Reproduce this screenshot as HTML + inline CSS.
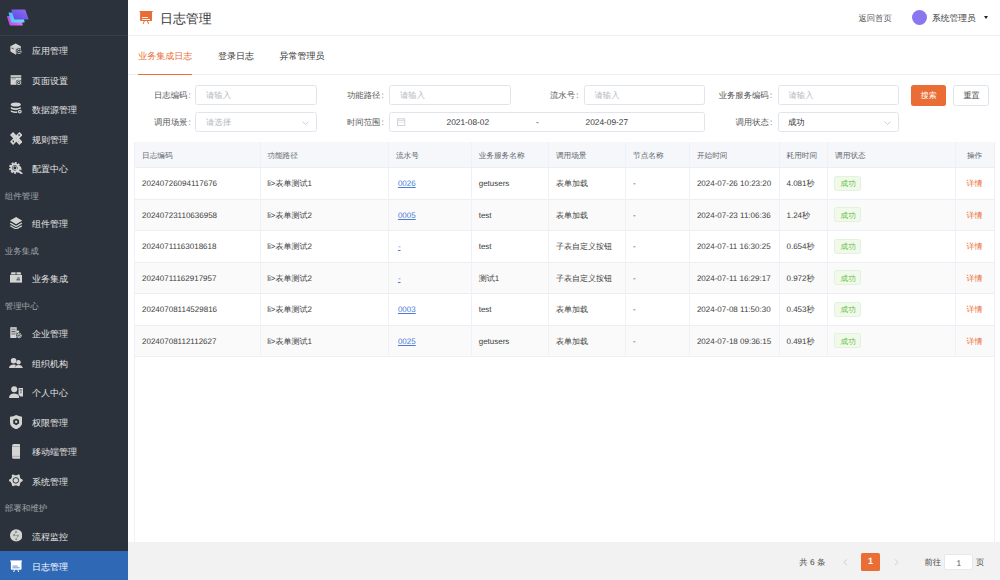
<!DOCTYPE html>
<html><head><meta charset="utf-8"><style>
*{box-sizing:border-box;margin:0;padding:0}
html,body{width:1000px;height:580px;overflow:hidden;background:#fff;font-family:"Liberation Sans",sans-serif;color:#333;text-rendering:geometricPrecision}
.a{position:absolute}
.t{position:absolute;white-space:nowrap;line-height:1}
#side{position:absolute;left:0;top:0;width:128px;height:580px;background:#2c323b}
.it{position:absolute;left:0;width:128px;height:29.75px;color:#e4e4e4;font-size:9px;white-space:nowrap}
.it span{position:absolute;left:32px;top:11.7px;line-height:1;font-weight:500}
.it svg{position:absolute}
.grp{position:absolute;left:4.8px;height:25px;color:#a3a7ad;font-size:8.5px;white-space:nowrap}
.grp span{position:absolute;left:0;top:8.7px;line-height:1}
.it.act{background:#2f68b5;color:#fff}
.lbl{position:absolute;font-size:8.33px;color:#555;white-space:nowrap;line-height:1}
.inp{position:absolute;height:20px;border:1px solid #e1e4ea;border-radius:2.5px;background:#fff;font-size:8.33px;color:#b6bac2;white-space:nowrap}
.inp>span{position:absolute;top:5.2px;line-height:1}
.hl{position:absolute;height:1px;background:#eceef4}
.vl{position:absolute;width:1px;background:#f0f1f6}
.c{position:absolute;white-space:nowrap;line-height:1;font-size:8px;color:#3d3d3d}
.h{position:absolute;white-space:nowrap;line-height:1;font-size:7.65px;color:#63676f}
.lnk{color:#4a7bd6;text-decoration:underline;text-decoration-thickness:0.8px;text-underline-offset:1px}
.tag{position:absolute;height:15px;width:26.8px;border:1px solid #e1f3d8;background:#f0f9eb;border-radius:2.5px}
.tag span{position:absolute;left:5.3px;top:3.4px;line-height:1;font-size:7.6px;color:#67c23a}
.op{color:#ea6d35}
#foot{position:absolute;left:128px;top:542px;width:872px;height:38px;background:#f2f2f2}
</style></head><body>
<div id="side">
  <svg class="a" style="left:6px;top:8.5px" width="24" height="19" viewBox="0 0 24 19">
    <defs><linearGradient id="g1" x1="0" y1="1" x2="1" y2="0"><stop offset="0" stop-color="#5a48e2"/><stop offset="1" stop-color="#8e6ff3"/></linearGradient>
    <linearGradient id="g2" x1="0" y1="0" x2="1" y2="1"><stop offset="0" stop-color="#4fb8f2"/><stop offset="1" stop-color="#6ad9f7"/></linearGradient>
    <linearGradient id="g3" x1="0" y1="0" x2="1" y2="0"><stop offset="0" stop-color="#b44ee8"/><stop offset="1" stop-color="#e070f5"/></linearGradient></defs>
    <path d="M1.6,7 H13 Q13.8,7 14,7.8 L16.8,15.8 Q17,16.5 16.2,16.5 H4.6 Q3.8,16.5 3.6,15.8 L1,7.8 Q0.8,7 1.6,7Z" fill="url(#g3)"/>
    <path d="M3.2,3.5 H15.2 Q16,3.5 16.2,4.3 L18.6,12.7 Q18.8,13.5 18,13.5 H6.2 Q5.4,13.5 5.2,12.7 L2.6,4.3 Q2.4,3.5 3.2,3.5Z" fill="url(#g2)"/>
    <path d="M6,0.5 H18.4 Q19.2,0.5 19.5,1.3 L22.5,9.7 Q22.8,10.5 22,10.5 H9.2 Q8.4,10.5 8.1,9.7 L5.4,1.3 Q5.2,0.5 6,0.5Z" fill="url(#g1)"/>
  </svg>
  <div class="a" style="left:0;top:35px;width:128px;height:1px;background:#383e47"></div>
  <div class="it" style="top:35.50px"><svg style="left:9.8px;top:7.80px;width:12px;height:12px" viewBox="0 0 12 12"><path d="M0.4 3.2L5.6 0.5L10.8 3.2V8.6L5.6 11.5L0.4 8.6Z" fill="#d4d4d4"/><path d="M0.4 3.2L5.6 5.6L10.8 3.2" fill="none" stroke="#b8b8b8" stroke-width="0.5"/><path d="M5.6 5.6V11.5" stroke="#b8b8b8" stroke-width="0.5"/><path d="M1.4 5L3.8 6" stroke="#2c323b" stroke-width="0.7"/><circle cx="8.9" cy="8.4" r="3.1" fill="#2c323b"/><circle cx="8.9" cy="8.4" r="2.1" fill="none" stroke="#d4d4d4" stroke-width="1.1" stroke-dasharray="1 0.6"/><circle cx="8.9" cy="8.4" r="0.7" fill="#d4d4d4"/></svg><span>应用管理</span></div><div class="it" style="top:65.00px"><svg style="left:10px;top:8.70px;width:12px;height:12px" viewBox="0 0 12 12"><rect x="0.6" y="1.2" width="10.6" height="9.6" fill="#d4d4d4"/><rect x="0.6" y="2.9" width="10.6" height="0.6" fill="#2c323b"/><rect x="1.6" y="4.2" width="4.2" height="1.2" fill="#9a9da2"/><circle cx="8.7" cy="8.6" r="2.9" fill="#2c323b"/><circle cx="8.7" cy="8.6" r="2" fill="none" stroke="#d4d4d4" stroke-width="1"/><path d="M8.1 7.6L9.6 8.6L8.1 9.6Z" fill="#d4d4d4"/></svg><span>页面设置</span></div><div class="it" style="top:94.50px"><svg style="left:10px;top:7.70px;width:12.5px;height:12.5px" viewBox="0 0 12.5 12.5"><ellipse cx="5.8" cy="2.6" rx="5" ry="2" fill="#d4d4d4"/><path d="M0.8 4.9Q5.8 7.4 10.8 4.9V6.7Q5.8 9.2 0.8 6.7Z" fill="#d4d4d4"/><path d="M0.8 8.3Q5.8 10.8 10.8 8.3V9.8Q5.8 12.3 0.8 9.8Z" fill="#d4d4d4"/><circle cx="9.8" cy="9.6" r="2.6" fill="#2c323b"/><circle cx="9.8" cy="9.6" r="1.9" fill="#d4d4d4"/><rect x="9.2" y="9" width="1.2" height="1.2" fill="#2c323b"/></svg><span>数据源管理</span></div><div class="it" style="top:124.00px"><svg style="left:9.8px;top:7.80px;width:12.5px;height:12.9px" viewBox="0 0 12.5 12.9"><path d="M0 3.1L3.1 0L12.5 9.8L9.4 12.9Z" fill="#d4d4d4"/><path d="M9.4 0L12.5 3.1L3.1 12.9L0 9.8Z" fill="#d4d4d4"/><path d="M8.2 3.0L9.4 2.7L9.2 4.1" fill="none" stroke="#2c323b" stroke-width="0.9"/><path d="M2.4 9.2L3.6 8.9L3.4 10.3" fill="none" stroke="#2c323b" stroke-width="0.9"/><circle cx="3.2" cy="3.6" r="0.45" fill="#7d8086"/><circle cx="6.2" cy="6.6" r="0.45" fill="#7d8086"/><circle cx="8.6" cy="9.2" r="0.45" fill="#7d8086"/></svg><span>规则管理</span></div><div class="it" style="top:153.50px"><svg style="left:8.8px;top:8.10px;width:14.2px;height:12.7px" viewBox="0 0 14.2 12.7"><g transform="translate(5.9 5.9)"><circle r="4.6" fill="none" stroke="#d4d4d4" stroke-width="2.6" stroke-dasharray="1.8 1.2"/><circle r="3.7" fill="none" stroke="#d4d4d4" stroke-width="1.8"/><circle r="1.9" fill="none" stroke="#d4d4d4" stroke-width="0.9"/></g><path d="M7.4 7.2L13.2 12" stroke="#d4d4d4" stroke-width="1.9"/><path d="M8.8 4.4Q12.4 4.6 12 8.2" fill="none" stroke="#d4d4d4" stroke-width="1.1"/></svg><span>配置中心</span></div><div class="grp" style="top:183.00px"><span>组件管理</span></div><div class="it" style="top:208.60px"><svg style="left:9.8px;top:8.20px;width:12.2px;height:12.5px" viewBox="0 0 12.2 12.5"><path d="M6.1 0L12.2 3.6L6.1 7.2L0 3.6Z" fill="#d4d4d4"/><path d="M0.3 6.1L6.1 9.5L11.9 6.1" fill="none" stroke="#d4d4d4" stroke-width="1.3"/><path d="M0.3 8.7L6.1 12L11.9 8.7" fill="none" stroke="#d4d4d4" stroke-width="1.3"/></svg><span>组件管理</span></div><div class="grp" style="top:238.10px"><span>业务集成</span></div><div class="it" style="top:263.70px"><svg style="left:10px;top:7.20px;width:12px;height:12px" viewBox="0 0 12 12"><rect x="0" y="4" width="12" height="7.6" fill="#d4d4d4"/><path d="M0.7 3.6L1.4 1.3H5.6V3.6Z" fill="#d4d4d4"/><path d="M6.5 3.6V1.3H10.6L11.3 3.6Z" fill="#d4d4d4"/><rect x="7.2" y="6.6" width="2.4" height="0.9" fill="#2c323b"/><rect x="6.4" y="8.4" width="3.6" height="0.9" fill="#2c323b"/></svg><span>业务集成</span></div><div class="grp" style="top:293.20px"><span>管理中心</span></div><div class="it" style="top:318.80px"><svg style="left:10px;top:8.50px;width:12px;height:12px" viewBox="0 0 12 12"><rect x="0.3" y="0.2" width="6.4" height="10.8" fill="#d4d4d4"/><rect x="1.4" y="1.6" width="4.2" height="1.6" fill="#8d9096"/><rect x="1.4" y="4.3" width="4.2" height="0.9" fill="#2c323b"/><rect x="1.4" y="6.1" width="4.2" height="1.6" fill="#8d9096"/><rect x="6.6" y="3.6" width="2.6" height="3.2" fill="#d4d4d4"/><circle cx="9" cy="8.6" r="3" fill="#2c323b"/><circle cx="9" cy="8.6" r="2" fill="none" stroke="#d4d4d4" stroke-width="1.4" stroke-dasharray="1 0.5"/><circle cx="9" cy="8.6" r="1.1" fill="none" stroke="#d4d4d4" stroke-width="0.7"/></svg><span>企业管理</span></div><div class="it" style="top:348.30px"><svg style="left:9px;top:9.40px;width:14px;height:10.4px" viewBox="0 0 14 10.4"><circle cx="4.6" cy="2.8" r="2.8" fill="#d4d4d4"/><path d="M0 10.4Q0 6.4 4.8 6.4Q6 6.4 6.8 6.8L5.6 10.4Z" fill="#d4d4d4"/><circle cx="9.5" cy="4.2" r="2.2" fill="#d4d4d4"/><path d="M5.9 10.4Q5.9 7.1 9.6 7.1Q13.4 7.1 13.9 10.4Z" fill="#d4d4d4"/></svg><span>组织机构</span></div><div class="it" style="top:377.80px"><svg style="left:8.8px;top:7.80px;width:14.5px;height:12.1px" viewBox="0 0 14.5 12.1"><circle cx="5.2" cy="3.2" r="3" fill="#d4d4d4"/><path d="M0 12.1Q0 7.4 5.3 7.4Q8.4 7.4 9.8 9.6L10.2 12.1Z" fill="#d4d4d4"/><path d="M9.6 2H14.5V10.6H11.2L9.6 8.4Z" fill="#d4d4d4"/><rect x="10.6" y="3.6" width="2.6" height="0.8" fill="#2c323b"/><rect x="11" y="5.4" width="1.8" height="1.8" fill="#8d9096"/></svg><span>个人中心</span></div><div class="it" style="top:407.30px"><svg style="left:9.8px;top:7.50px;width:12.3px;height:14.4px" viewBox="0 0 12.3 14.4"><path d="M6.15 0Q9 1.4 12.3 1.8V7.4Q12.3 11.8 6.15 14.4Q0 11.8 0 7.4V1.8Q3.3 1.4 6.15 0Z" fill="#d4d4d4"/><path d="M6.15 3.4L9.1 5.1V8.5L6.15 10.2L3.2 8.5V5.1Z" fill="#2c323b"/><circle cx="6.15" cy="6.8" r="1.2" fill="#d4d4d4"/></svg><span>权限管理</span></div><div class="it" style="top:436.80px"><svg style="left:11.7px;top:7.20px;width:8.7px;height:14.8px" viewBox="0 0 8.7 14.8"><rect x="0" y="0" width="8.7" height="14.8" rx="1.9" fill="#d4d4d4"/><rect x="0" y="2.3" width="8.7" height="0.6" fill="#8d9096"/><rect x="0" y="11.9" width="8.7" height="0.6" fill="#8d9096"/></svg><span>移动端管理</span></div><div class="it" style="top:466.30px"><svg style="left:9px;top:8.00px;width:13.7px;height:12.8px" viewBox="0 0 13.7 12.8"><circle cx="6.85" cy="6.4" r="5.3" fill="#d4d4d4"/><circle cx="12.25" cy="6.40" r="1.45" fill="#d4d4d4"/><circle cx="9.55" cy="10.82" r="1.45" fill="#d4d4d4"/><circle cx="4.15" cy="10.82" r="1.45" fill="#d4d4d4"/><circle cx="1.45" cy="6.40" r="1.45" fill="#d4d4d4"/><circle cx="4.15" cy="1.98" r="1.45" fill="#d4d4d4"/><circle cx="9.55" cy="1.98" r="1.45" fill="#d4d4d4"/><circle cx="12.83" cy="9.75" r="1.5" fill="#2c323b"/><circle cx="6.85" cy="13.10" r="1.5" fill="#2c323b"/><circle cx="0.87" cy="9.75" r="1.5" fill="#2c323b"/><circle cx="0.87" cy="3.05" r="1.5" fill="#2c323b"/><circle cx="6.85" cy="-0.30" r="1.5" fill="#2c323b"/><circle cx="12.83" cy="3.05" r="1.5" fill="#2c323b"/><circle cx="6.85" cy="6.4" r="2.8" fill="none" stroke="#2c323b" stroke-width="1"/></svg><span>系统管理</span></div><div class="grp" style="top:495.80px"><span>部署和维护</span></div><div class="it" style="top:521.40px"><svg style="left:9.9px;top:7.90px;width:12.5px;height:12.8px" viewBox="0 0 12.5 12.8"><circle cx="6.2" cy="6.4" r="6.2" fill="#d4d4d4"/><path d="M6.1 2.9 L4.0 6.2 L7.9 6.7 L6.2 10.3" fill="none" stroke="#a0a3a8" stroke-width="0.9"/><circle cx="6.1" cy="2.9" r="1.1" fill="#909399"/><circle cx="4.0" cy="6.2" r="1.1" fill="#909399"/><circle cx="7.9" cy="6.7" r="1.1" fill="#909399"/><circle cx="6.2" cy="10.3" r="1.1" fill="#909399"/></svg><span>流程监控</span></div><div class="it act" style="top:550.90px"><svg style="left:9.8px;top:8.70px;width:12.4px;height:12.8px" viewBox="0 0 12.4 12.8"><rect x="0" y="0.4" width="12.4" height="1.1" rx="0.5" fill="#fff"/><path d="M0.9 0.8H11.5V8.9Q11.5 9.7 10.7 9.7H1.7Q0.9 9.7 0.9 8.9Z" fill="#fff"/><rect x="2.4" y="5.6" width="5.4" height="1" fill="#6f98d4"/><rect x="2.4" y="7.3" width="7.4" height="1" fill="#6f98d4"/><path d="M4.6 9.6L3.6 12.2M7.8 9.6L8.8 12.2" stroke="#fff" stroke-width="1" stroke-linecap="round"/></svg><span>日志管理</span></div>
</div>
<div class="a" style="left:128px;top:35px;width:872px;height:1px;background:#eceef2"></div>
<svg class="a" style="left:139px;top:11px" width="14" height="13" viewBox="0 0 14 13"><rect x="0.4" y="0" width="13.4" height="1.1" rx="0.5" fill="#ea6d35"/><path d="M1.1 0.5H13V9.3Q13 10.1 12.2 10.1H1.9Q1.1 10.1 1.1 9.3Z" fill="#ea6d35"/><rect x="3" y="6.1" width="5.9" height="0.9" fill="#fff"/><rect x="3" y="8" width="8" height="0.9" fill="#fff"/><path d="M5.3 10L4.3 12.6M8.4 10L9.5 12.6" stroke="#ea6d35" stroke-width="1" stroke-linecap="round"/></svg>
<div class="t" style="left:160px;top:12.9px;font-size:12.9px;color:#333">日志管理</div>
<div class="t" style="left:858.4px;top:13.8px;font-size:8.33px;color:#555">返回首页</div>
<div class="a" style="left:911.8px;top:9.8px;width:15.4px;height:15.4px;border-radius:50%;background:#8a76ef"></div>
<div class="t" style="left:932px;top:13.6px;font-size:8.75px;color:#363636">系统管理员</div>
<div class="a" style="left:983.8px;top:16.2px;width:0;height:0;border-left:2.5px solid transparent;border-right:2.5px solid transparent;border-top:3.4px solid #222"></div>

<div class="a" style="left:128px;top:74px;width:872px;height:1px;background:#eceef2"></div>
<div class="t" style="left:138.3px;top:51.6px;font-size:9px;color:#ea6d35">业务集成日志</div>
<div class="a" style="left:138.3px;top:73.5px;width:54px;height:1.6px;border-radius:1px;background:#ea6e36"></div>
<div class="t" style="left:218px;top:51.6px;font-size:9px;color:#333">登录日志</div>
<div class="t" style="left:279.6px;top:51.6px;font-size:9px;color:#333">异常管理员</div>

<div class="lbl" style="left:154px;top:90.9px">日志编码<span style="margin-left:1.2px">:</span></div>
<div class="inp" style="left:195px;width:122px;top:85.2px"><span style="left:10px">请输入</span></div>
<div class="lbl" style="left:347px;top:90.9px">功能路径<span style="margin-left:1.2px">:</span></div>
<div class="inp" style="left:389px;width:122px;top:85.2px"><span style="left:10px">请输入</span></div>
<div class="lbl" style="left:550px;top:90.9px">流水号<span style="margin-left:1.2px">:</span></div>
<div class="inp" style="left:583.5px;width:121.5px;top:85.2px"><span style="left:10px">请输入</span></div>
<div class="lbl" style="left:718.7px;top:90.9px">业务服务编码<span style="margin-left:1.2px">:</span></div>
<div class="inp" style="left:777.5px;width:121px;top:85.2px"><span style="left:10px">请输入</span></div>
<div class="a" style="left:910.6px;top:85px;width:35.8px;height:20.8px;background:#ea6d35;border-radius:2.5px"><span class="t" style="left:10.2px;top:6.9px;font-size:8px;color:#fff">搜索</span></div>
<div class="a" style="left:953.2px;top:85px;width:35.5px;height:20.8px;border:1px solid #e1e4ea;border-radius:2.5px"><span class="t" style="left:9.4px;top:5.9px;font-size:8px;color:#444">重置</span></div>

<div class="lbl" style="left:154px;top:117.9px">调用场景<span style="margin-left:1.2px">:</span></div>
<div class="inp" style="left:195px;width:122px;top:112px"><span style="left:10px">请选择</span><svg class="a" style="right:6.6px;top:8.2px" width="7" height="4.4" viewBox="0 0 7 4.4"><path d="M0.5 0.6L3.5 3.6L6.5 0.6" fill="none" stroke="#c0c4cc" stroke-width="0.8"/></svg></div>
<div class="lbl" style="left:347px;top:117.9px">时间范围<span style="margin-left:1.2px">:</span></div>
<div class="inp" style="left:389px;width:316px;top:112px;color:#333">
  <svg class="a" style="left:7.4px;top:5px" width="8.2" height="8" viewBox="0 0 8.2 8"><rect x="0.4" y="0.9" width="7.4" height="6.7" fill="none" stroke="#c6c9cf" stroke-width="0.8"/><path d="M0.4 2.6H7.8" stroke="#c6c9cf" stroke-width="0.7"/><path d="M2.1 0V1.3M6.1 0V1.3" stroke="#c6c9cf" stroke-width="0.7"/><path d="M1.7 4.5h1M3.6 4.5h1M5.5 4.5h1" stroke="#c6c9cf" stroke-width="0.6"/></svg>
  <span style="left:56.5px">2021-08-02</span>
  <span style="left:146px">-</span>
  <span style="left:195.5px">2024-09-27</span>
</div>
<div class="lbl" style="left:735.5px;top:117.9px">调用状态<span style="margin-left:1.2px">:</span></div>
<div class="inp" style="left:777.5px;width:121px;top:112px;color:#333"><span style="left:9.5px">成功</span><svg class="a" style="right:6.6px;top:8.2px" width="7" height="4.4" viewBox="0 0 7 4.4"><path d="M0.5 0.6L3.5 3.6L6.5 0.6" fill="none" stroke="#c0c4cc" stroke-width="0.8"/></svg></div>

<div class="a" style="left:134.7px;top:142.0px;width:859.3px;height:25.5px;background:#f5f7fa"></div><div class="a" style="left:134.7px;top:199.0px;width:859.3px;height:31.5px;background:#fafafa"></div><div class="a" style="left:134.7px;top:262.0px;width:859.3px;height:31.5px;background:#fafafa"></div><div class="a" style="left:134.7px;top:325.0px;width:859.3px;height:31.5px;background:#fafafa"></div><div class="hl" style="left:134.7px;top:167.0px;width:859.3px"></div><div class="hl" style="left:134.7px;top:198.5px;width:859.3px"></div><div class="hl" style="left:134.7px;top:230.0px;width:859.3px"></div><div class="hl" style="left:134.7px;top:261.5px;width:859.3px"></div><div class="hl" style="left:134.7px;top:293.0px;width:859.3px"></div><div class="hl" style="left:134.7px;top:324.5px;width:859.3px"></div><div class="hl" style="left:134.7px;top:356.0px;width:859.3px"></div><div class="vl" style="left:134.2px;top:142.0px;height:400.0px"></div><div class="vl" style="left:259.5px;top:142.0px;height:214.5px"></div><div class="vl" style="left:388.1px;top:142.0px;height:214.5px"></div><div class="vl" style="left:470.9px;top:142.0px;height:214.5px"></div><div class="vl" style="left:548.1px;top:142.0px;height:214.5px"></div><div class="vl" style="left:625.2px;top:142.0px;height:214.5px"></div><div class="vl" style="left:689.1px;top:142.0px;height:214.5px"></div><div class="vl" style="left:778.7px;top:142.0px;height:214.5px"></div><div class="vl" style="left:827.3px;top:142.0px;height:214.5px"></div><div class="vl" style="left:954.7px;top:142.0px;height:214.5px"></div><div class="vl" style="left:993.5px;top:142.0px;height:400.0px"></div><div class="h" style="left:142.0px;top:151.8px">日志编码</div><div class="h" style="left:267.3px;top:151.8px">功能路径</div><div class="h" style="left:395.90000000000003px;top:151.8px">流水号</div><div class="h" style="left:478.7px;top:151.8px">业务服务名称</div><div class="h" style="left:555.9px;top:151.8px">调用场景</div><div class="h" style="left:633.0px;top:151.8px">节点名称</div><div class="h" style="left:696.9px;top:151.8px">开始时间</div><div class="h" style="left:786.5px;top:151.8px">耗用时间</div><div class="h" style="left:835.0999999999999px;top:151.8px">调用状态</div><div class="h" style="left:955.2px;width:38.799999999999955px;text-align:center;top:151.8px">操作</div><div class="c" style="left:142.0px;top:180.2px">20240726094117676</div><div class="c" style="left:267.3px;top:180.2px">li&gt;表单测试1</div><div class="c" style="left:397.90000000000003px;top:180.2px"><span class="lnk">0026</span></div><div class="c" style="left:478.7px;top:180.2px">getusers</div><div class="c" style="left:555.9px;top:180.2px">表单加载</div><div class="c" style="left:633.0px;top:180.2px">-</div><div class="c" style="left:696.9px;top:180.2px">2024-07-26 10:23:20</div><div class="c" style="left:786.5px;top:180.2px">4.081秒</div><div class="tag" style="left:834.3px;top:175.7px"><span>成功</span></div><div class="c op" style="left:966.6px;top:180.2px">详情</div><div class="c" style="left:142.0px;top:211.7px">20240723110636958</div><div class="c" style="left:267.3px;top:211.7px">li&gt;表单测试2</div><div class="c" style="left:397.90000000000003px;top:211.7px"><span class="lnk">0005</span></div><div class="c" style="left:478.7px;top:211.7px">test</div><div class="c" style="left:555.9px;top:211.7px">表单加载</div><div class="c" style="left:633.0px;top:211.7px">-</div><div class="c" style="left:696.9px;top:211.7px">2024-07-23 11:06:36</div><div class="c" style="left:786.5px;top:211.7px">1.24秒</div><div class="tag" style="left:834.3px;top:207.2px"><span>成功</span></div><div class="c op" style="left:966.6px;top:211.7px">详情</div><div class="c" style="left:142.0px;top:243.2px">20240711163018618</div><div class="c" style="left:267.3px;top:243.2px">li&gt;表单测试2</div><div class="c" style="left:397.90000000000003px;top:243.2px"><span class="lnk">-</span></div><div class="c" style="left:478.7px;top:243.2px">test</div><div class="c" style="left:555.9px;top:243.2px">子表自定义按钮</div><div class="c" style="left:633.0px;top:243.2px">-</div><div class="c" style="left:696.9px;top:243.2px">2024-07-11 16:30:25</div><div class="c" style="left:786.5px;top:243.2px">0.654秒</div><div class="tag" style="left:834.3px;top:238.7px"><span>成功</span></div><div class="c op" style="left:966.6px;top:243.2px">详情</div><div class="c" style="left:142.0px;top:274.7px">20240711162917957</div><div class="c" style="left:267.3px;top:274.7px">li&gt;表单测试2</div><div class="c" style="left:397.90000000000003px;top:274.7px"><span class="lnk">-</span></div><div class="c" style="left:478.7px;top:274.7px">测试1</div><div class="c" style="left:555.9px;top:274.7px">子表自定义按钮</div><div class="c" style="left:633.0px;top:274.7px">-</div><div class="c" style="left:696.9px;top:274.7px">2024-07-11 16:29:17</div><div class="c" style="left:786.5px;top:274.7px">0.972秒</div><div class="tag" style="left:834.3px;top:270.2px"><span>成功</span></div><div class="c op" style="left:966.6px;top:274.7px">详情</div><div class="c" style="left:142.0px;top:306.2px">20240708114529816</div><div class="c" style="left:267.3px;top:306.2px">li&gt;表单测试2</div><div class="c" style="left:397.90000000000003px;top:306.2px"><span class="lnk">0003</span></div><div class="c" style="left:478.7px;top:306.2px">test</div><div class="c" style="left:555.9px;top:306.2px">表单加载</div><div class="c" style="left:633.0px;top:306.2px">-</div><div class="c" style="left:696.9px;top:306.2px">2024-07-08 11:50:30</div><div class="c" style="left:786.5px;top:306.2px">0.453秒</div><div class="tag" style="left:834.3px;top:301.7px"><span>成功</span></div><div class="c op" style="left:966.6px;top:306.2px">详情</div><div class="c" style="left:142.0px;top:337.7px">20240708112112627</div><div class="c" style="left:267.3px;top:337.7px">li&gt;表单测试1</div><div class="c" style="left:397.90000000000003px;top:337.7px"><span class="lnk">0025</span></div><div class="c" style="left:478.7px;top:337.7px">getusers</div><div class="c" style="left:555.9px;top:337.7px">表单加载</div><div class="c" style="left:633.0px;top:337.7px">-</div><div class="c" style="left:696.9px;top:337.7px">2024-07-18 09:36:15</div><div class="c" style="left:786.5px;top:337.7px">0.491秒</div><div class="tag" style="left:834.3px;top:333.2px"><span>成功</span></div><div class="c op" style="left:966.6px;top:337.7px">详情</div>

<div id="foot"><div class="a" style="left:0;top:0.5px;width:872px;height:37px">
  <div class="t" style="left:671.3px;top:15.2px;font-size:8.33px;color:#484848">共 6 条</div>
  <svg class="a" style="left:714.8px;top:16.5px" width="5" height="6.5" viewBox="0 0 5 6.5"><path d="M3.8 0.4L1 3.25L3.8 6.1" fill="none" stroke="#c0c4cc" stroke-width="0.8"/></svg>
  <div class="a" style="left:733.2px;top:10px;width:19.2px;height:18px;background:#ea6d35;border-radius:1.5px"><span class="t" style="left:6.8px;top:4.7px;font-size:9px;font-weight:bold;color:#fff">1</span></div>
  <svg class="a" style="left:766.4px;top:16.5px" width="5" height="6.5" viewBox="0 0 5 6.5"><path d="M1 0.4L3.8 3.25L1 6.1" fill="none" stroke="#c0c4cc" stroke-width="0.8"/></svg>
  <div class="t" style="left:796.4px;top:15.2px;font-size:8.33px;color:#484848">前往</div>
  <div class="a" style="left:816.2px;top:11px;width:28.8px;height:16.9px;background:#fff;border:1px solid #e6e8ee;border-radius:2px"><span class="t" style="left:11.2px;top:4px;font-size:8.33px;color:#555">1</span></div>
  <div class="t" style="left:848px;top:15.2px;font-size:8.33px;color:#484848">页</div>
</div></div>
</body></html>
